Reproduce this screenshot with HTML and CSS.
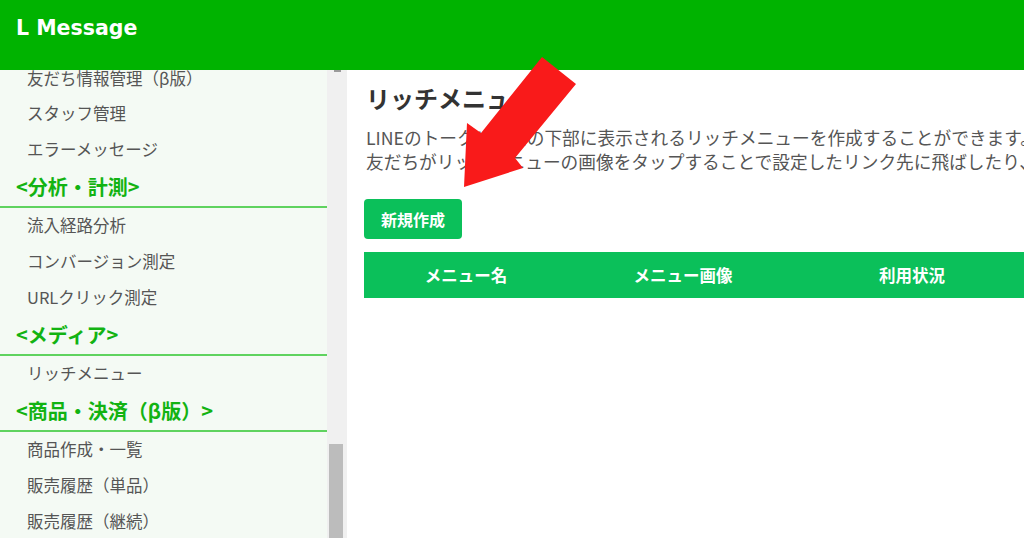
FILE: index.html
```html
<!DOCTYPE html>
<html lang="ja">
<head>
<meta charset="utf-8">
<title>L Message</title>
<link rel="stylesheet" href="styles.css">
</head>
<body>
<header class="topbar">
  <div class="logo">L Message</div>
</header>
<div class="layout">
  <aside class="sidebar">
    <nav class="side-list">
      <div class="side-item side-item-top">友だち情報管理（β版）</div>
      <div class="side-item">スタッフ管理</div>
      <div class="side-item">エラーメッセージ</div>
      <div class="side-head">&lt;分析・計測&gt;</div>
      <div class="side-item">流入経路分析</div>
      <div class="side-item">コンバージョン測定</div>
      <div class="side-item">URLクリック測定</div>
      <div class="side-head">&lt;メディア&gt;</div>
      <div class="side-item">リッチメニュー</div>
      <div class="side-head">&lt;商品・決済（β版）&gt;</div>
      <div class="side-item">商品作成・一覧</div>
      <div class="side-item">販売履歴（単品）</div>
      <div class="side-item">販売履歴（継続）</div>
    </nav>
  </aside>
  <div class="scrolltrack">
    <div class="scroll-cap"></div>
    <div class="scroll-space"></div>
    <div class="scroll-thumb"></div>
  </div>
  <main class="main">
    <h1 class="title">リッチメニュー</h1>
    <p class="desc">LINEのトークルームの下部に表示されるリッチメニューを作成することができます。<br>友だちがリッチメニューの画像をタップすることで設定したリンク先に飛ばしたり、テキストを送信したりできます。</p>
    <button class="btn-new">新規作成</button>
    <div class="table-head">
      <div class="th">メニュー名</div>
      <div class="th">メニュー画像</div>
      <div class="th">利用状況</div>
      <div class="th">操作</div>
    </div>
  </main>
</div>
<svg class="arrow" width="1024" height="538" viewBox="0 0 1024 538">
  <polygon points="464,187 467,123 481,133 542,57 576,84 515,158 523,168" fill="#f91a1a"/>
</svg>
</body>
</html>
```
FILE: styles.css
```css
* { box-sizing: border-box; }
html, body {
  margin: 0;
  padding: 0;
  width: 1024px;
  height: 538px;
  overflow: hidden;
  background: #ffffff;
  font-family: "Noto Sans CJK JP", "Noto Sans", sans-serif;
}
.topbar {
  height: 70px;
  background: #00b300;
  padding: 14px 0 0 16px;
}
.logo {
  font-family: "DejaVu Sans", "Liberation Sans", sans-serif;
  font-weight: bold;
  font-size: 20.5px;
  line-height: 28px;
  color: #ffffff;
}
.layout {
  display: flex;
  height: 468px;
}
.sidebar {
  width: 327px;
  flex: none;
  background: #f4faf4;
  overflow: hidden;
}
.side-item {
  height: 36px;
  padding-left: 27px;
  font-size: 16.5px;
  line-height: 35px;
  color: #555555;
  white-space: nowrap;
}
.side-item-top {
  height: 26px;
  line-height: 16px;
}
.side-head {
  height: 40px;
  padding-left: 16px;
  font-size: 20px;
  font-weight: bold;
  line-height: 37px;
  color: #12b312;
  border-bottom: 2px solid #5fd35f;
  white-space: nowrap;
}
.scrolltrack {
  width: 20px;
  flex: none;
  background: #f0f0f0;
  display: flex;
  flex-direction: column;
  align-items: center;
}
.scroll-cap {
  width: 7px;
  height: 2px;
  background: #9a9a9a;
}
.scroll-space {
  height: 372px;
}
.scroll-thumb {
  width: 14px;
  flex: 1;
  background: #bcbcbc;
  margin-left: -2px;
}
.main {
  flex: 1;
  min-width: 0;
  overflow: hidden;
  padding: 12px 0 0 17px;
}
.title {
  margin: 0;
  font-size: 24px;
  font-weight: bold;
  line-height: 32px;
  color: #333333;
  padding-left: 2px;
}
.desc {
  margin: 11px 0 0;
  padding-left: 2px;
  font-size: 17.7px;
  line-height: 24px;
  color: #555555;
  white-space: nowrap;
}
.btn-new {
  display: block;
  margin-top: 26px;
  width: 98px;
  height: 40px;
  border: none;
  border-radius: 4px;
  background: #0bc05a;
  color: #ffffff;
  font-family: "Noto Sans CJK JP", sans-serif;
  font-size: 16px;
  font-weight: bold;
  padding: 0;
}
.table-head {
  margin-top: 13px;
  width: 900px;
  height: 46px;
  background: #0bc05a;
  display: grid;
  grid-template-columns: 204px 230px 228px 1fr;
  align-items: center;
}
.th {
  text-align: center;
  color: #ffffff;
  font-size: 16.5px;
  font-weight: bold;
}
.arrow {
  position: absolute;
  left: 0;
  top: 0;
  pointer-events: none;
}
```
